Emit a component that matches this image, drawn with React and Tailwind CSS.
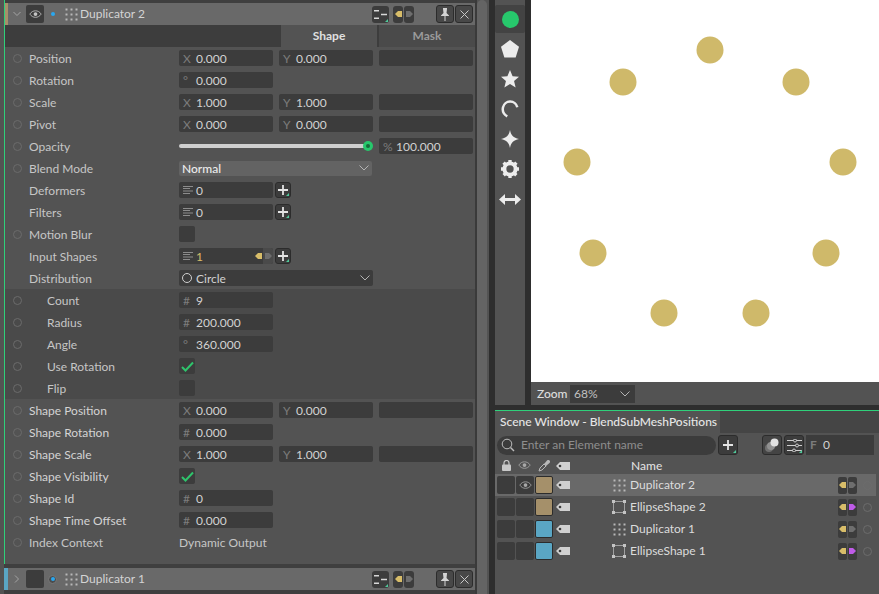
import React from 'react';

const Eye = ({c='#c4c4c4', w=16}) => (
  <svg width={w} height={w*0.625} viewBox="0 0 16 10" fill="none"><path d="M1 5C3 2 5.500 1 8 1s5 1 7 4c-2 3-4.500 4-7 4S3 8 1 5Z" stroke={c} strokeWidth="1"/><circle cx="8" cy="5" r="2.300" fill={c}/></svg>
);
const Dots = () => (
  <svg width="13" height="13" viewBox="0 0 13 13" className="shrink-0">
    {[0,5,10].map(x=>[0,5,10].map(y=><rect key={x+'-'+y} x={x+0.5} y={y+0.5} width="2" height="2" fill="#b8b8b8"/>))}
  </svg>
);
const EllipseIco = () => (
  <svg width="14" height="14" viewBox="0 0 14 14" className="shrink-0"><rect x="1.500" y="1.500" width="11" height="11" fill="none" stroke="#a0a0a0"/>{[0,11].map(x=>[0,11].map(y=><rect key={x+'-'+y} x={x} y={y} width="3" height="3" fill="#c4c4c4"/>))}</svg>
);
const Ring = ({c='#6b6b6b'}) => <span className="w-[9px] h-[9px] rounded-full border shrink-0 block" style={{borderColor:c}} />;
const LeftTri = () => <svg width="7" height="8" viewBox="0 0 7 8"><path d="M0 4 3 1h4v6H3Z" fill="#d8bd69"/></svg>;
const RightTri = ({c='#6e6e6e'}) => <svg width="7" height="8" viewBox="0 0 7 8"><path d="M0 1h4l3 3-3 3H0Z" fill={c}/></svg>;
const ListIco = () => (
  <svg width="11" height="8" viewBox="0 0 11 8" className="shrink-0 mt-[-2px]"><path d="M0 .5h10M0 2.500h7M0 5h10M0 7.500h7" stroke="#8c8c8c"/></svg>
);
const Check = () => <svg width="13" height="11" viewBox="0 0 13 11" fill="none"><path d="M1 6l3.500 3.500L12 1.500" stroke="#2fc46c" strokeWidth="2"/></svg>;
const Chev = ({c='#b4b4b4'}) => <svg width="10" height="6" viewBox="0 0 10 6" fill="none" className="shrink-0"><path d="M.5.500 5 5 9.500.5" stroke={c}/></svg>;
const Tick = () => <svg className="absolute right-px bottom-px" width="3" height="3" viewBox="0 0 3 3"><path d="M3 0v3H0Z" fill="#4fc99a"/></svg>;

const Plus = () => (
  <span className="relative w-[16px] h-[16px] ml-[2px] bg-[#3c3c3c] border border-[#2c2c2c] rounded-[3px] flex items-center justify-center">
    <svg width="10" height="10" viewBox="0 0 10 10"><path d="M5 0v10M0 5h10" stroke="#e4e4e4" strokeWidth="1.800"/></svg><Tick/>
  </span>
);
const Field = ({pre, val, w='w-[94px]', yellow, children}) => (
  <div className={`${w} h-[16px] bg-[#3c3c3c] rounded-[2px] flex items-center pl-[4px] shrink-0 overflow-hidden`}>
    {pre && <span className="w-[13px] pt-[2px] text-[#7c7c7c] text-[12px] leading-none shrink-0">{pre}</span>}
    <span className={`text-[12px] pt-[2px] leading-none ${yellow?'text-[#d8bd69]':'text-[#d2d2d2]'}`}>{val}</span>
    {children}
  </div>
);
const Blank = () => <div className="w-[94px] h-[16px] bg-[#3c3c3c] rounded-[2px] shrink-0" />;
const Box = ({on}) => <div className="w-[16px] h-[16px] bg-[#3c3c3c] rounded-[2px] flex items-center justify-center">{on && <Check/>}</div>;
const XY = ({x, y}) => (
  <div className="flex gap-[6px]"><Field pre="X" val={x}/><Field pre="Y" val={y}/><Blank/></div>
);
const Row = ({label, ring=true, sub, bright, children}) => (
  <div className={`h-[22px] flex items-center pl-[8px] ${sub?'bg-[#4a4a4a]':''}`}>
    <div className="w-[9px] shrink-0 flex items-center">{ring && <Ring/>}</div>
    <div className={`${sub?'w-[132px] ml-[25px]':'w-[150px] ml-[7px]'} pt-[2px] text-[12px] ${bright?'text-[#d4d4d4]':'text-[#c6c6c6]'} leading-none shrink-0`}>{label}</div>
    <div className="flex items-center">{children}</div>
  </div>
);
const NodeHeader = ({stripe, sw, eye, open, title, dotRing}) => (
  <div className="h-[22px] bg-[#696969] flex items-center shrink-0">
    <div className={`${sw} h-full shrink-0`} style={{background:stripe}} />
    <div className="w-[18px] flex justify-center shrink-0">
      <svg width="8" height="8" viewBox="0 0 8 8" fill="none">{open ? <path d="M.5 2 4 5.500 7.500 2" stroke="#a4a4a4"/> : <path d="M2 .5 5.500 4 2 7.500" stroke="#a4a4a4"/>}</svg>
    </div>
    <div className="w-[18px] h-[18px] bg-[#3c3c3c] rounded-[2px] flex items-center justify-center shrink-0">{eye && <Eye w={13}/>}</div>
    <div className={`w-[9px] h-[9px] ml-[4px] rounded-full flex items-center justify-center shrink-0 ${dotRing?'bg-[#4c4c4c] border border-[#7a7a7a]':''}`}><span className="w-[4px] h-[4px] rounded-full bg-[#2aa7ef] shrink-0"/></div>
    <div className="ml-[8px] flex"><Dots/></div>
    <span className="ml-[2px] text-[12px] text-[#d4d4d4] leading-none">{title}</span>
    <div className="ml-auto mr-[2px] flex items-center">
      <span className="relative w-[17px] h-[17px] bg-[#3c3c3c] rounded-[3px] flex items-center justify-center">
        <svg width="13" height="9" viewBox="0 0 13 9"><path d="M0 .75h5M0 8.250h5M7 4.500h6" stroke="#d8d8d8" strokeWidth="1.500"/></svg><Tick/>
      </span>
      <span className="w-[10px] h-[17px] bg-[#3c3c3c] rounded-[3px] ml-[4px] flex items-center justify-center"><LeftTri/></span>
      <span className="w-[10px] h-[17px] bg-[#3c3c3c] rounded-[3px] ml-[1px] flex items-center justify-center"><RightTri/></span>
      <span className="w-[18px] h-[18px] bg-[#484848] border border-[#2c2c2c] rounded-[3px] ml-[22px] flex items-center justify-center">
        <svg width="8" height="13" viewBox="0 0 8 13"><path d="M2 0h4v1l-.5 4L8 7.500V8H4.500v5h-1V8H0v-.5L2.500 5 2 1Z" fill="#d4d4d4"/></svg>
      </span>
      <span className="w-[18px] h-[18px] bg-[#484848] border border-[#2c2c2c] rounded-[3px] ml-[1px] flex items-center justify-center">
        <svg width="9" height="9" viewBox="0 0 9 9"><path d="M.5.500l8 8M8.500.5l-8 8" stroke="#c8c8c8"/></svg>
      </span>
    </div>
  </div>
);
const Pill = ({magenta}) => (
  <div className="flex gap-px">
    <span className="w-[9px] h-[17px] bg-[#3c3c3c] rounded-[2px] flex items-center justify-center"><LeftTri/></span>
    <span className="w-[9px] h-[17px] bg-[#3c3c3c] rounded-[2px] flex items-center justify-center"><RightTri c={magenta?'#bf5be8':'#6e6e6e'}/></span>
  </div>
);
const Tag = () => <svg width="14" height="8" viewBox="0 0 14 8"><path d="M4 0h10v8H4L0 4Z" fill="#d0d0d0"/><circle cx="4" cy="4" r="1.300" fill="#3c3c3c"/></svg>;
const SceneRow = ({name, color, eye, sel, ico, magenta}) => (
  <div className={`h-[22px] flex items-center mr-[3px] ${sel?'bg-[#696969]':''}`}>
    <div className="w-[18px] h-[18px] ml-[2px] bg-[#3c3c3c] rounded-[2px] shrink-0" />
    <div className="w-[18px] h-[18px] ml-px bg-[#3c3c3c] rounded-[2px] shrink-0 flex items-center justify-center">{eye && <Eye w={13} c="#a8a8a8"/>}</div>
    <div className="w-[18px] h-[18px] ml-px border border-[#2c2c2c] rounded-[2px] shrink-0" style={{background:color}} />
    <div className="ml-[3px] w-[14px] flex"><Tag/></div>
    <div className="ml-[42px] w-[14px] flex justify-center">{ico==='dots' ? <Dots/> : <EllipseIco/>}</div>
    <span className="ml-[4px] text-[12px] text-[#dcdcdc] leading-none">{name}</span>
    <div className="ml-auto flex items-center">
      <Pill magenta={magenta}/>
      <div className="w-[9px] h-[9px] rounded-full border border-[#6c6c6c] ml-[6px] mr-[4px]" />
    </div>
  </div>
);
const dots = [[179,50],[92,82],[265,82],[46,162],[312,162],[62,253],[295,253],[133,313],[225,313]];
const tools = ['circle','penta','star','arc','spark','gear','arrows'];
const Tool = ({t}) => {
  const cls = "h-[30px] flex items-center justify-center";
  if (t==='circle') return <div className="h-[28px] mb-[1px] mt-[1px] flex items-center justify-center bg-[#434343] rounded-[2px]"><span className="w-[17px] h-[17px] rounded-full bg-[#27c86c]"/></div>;
  const f = '#ececec';
  const map = {
    penta:<path d="M8 0l8 6-3 9.500H3L0 6Z" fill={f}/>,
    star:<path d="M8 0l2.300 5.600 5.700.5-4.400 3.700 1.400 5.700L8 12.400 3 15.500l1.400-5.700L0 6.100l5.700-.5Z" fill={f}/>,
    arc:<path d="M14.500 6.500A6.500 6.500 0 0 0 1.800 6.500c-.8 3.500 1 6.500 3.800 8" fill="none" stroke={f} strokeWidth="2.200"/>,
    spark:<path d="M8 0c.8 4.500 3 7 8 8-5 1-7.200 3.500-8 8-.8-4.500-3-7-8-8 5-1 7.200-3.500 8-8Z" fill={f}/>,
    gear:<g><circle cx="8" cy="8" r="5" fill="none" stroke={f} strokeWidth="3.500"/><path d="M8 0v16M0 8h16M2.300 2.300l11.400 11.400M13.700 2.300 2.300 13.700" stroke={f} strokeWidth="3" strokeDasharray="3 10"/></g>,
  };
  if (t==='arrows') return <div className={cls}><svg width="22" height="13" viewBox="0 0 22 13"><path d="M0 6.500 6 1v4h10V1l6 5.500-6 5.500V8H6v4Z" fill={f}/></svg></div>;
  return <div className={cls}><svg width="18" height="18" viewBox="0 0 16 16">{map[t]}</svg></div>;
};

export default function App() {
  return (
    <div className="w-[879px] h-[594px] bg-[#2e2e2e] flex overflow-hidden" style={{fontFamily:'Lato, "Noto Sans", sans-serif'}}>
      {/* left inspector */}
      <div className="w-[475px] h-full shrink-0 flex flex-col bg-[#535353] pl-[4px]">
        <div className="flex-1 border-l border-[#2fd07a] min-h-0 flex flex-col">
          <div className="h-[3px] bg-[#3f3f3f] shrink-0" />
          <NodeHeader stripe="#a5906a" sw="w-[3px]" eye open title="Duplicator 2" />
          <div className="h-[22px] bg-[#3d3d3d] flex shrink-0 justify-end">
            <div className="w-[96px] bg-[#535353] text-[#e0e0e0] text-[12px] font-bold flex items-center justify-center">Shape</div>
            <div className="w-[2px]"/>
            <div className="w-[96px] bg-[#4a4a4a] text-[#9a9a9a] text-[12px] font-bold flex items-center justify-center">Mask</div>
          </div>
          <Row label="Position"><XY x="0.000" y="0.000"/></Row>
          <Row label="Rotation"><Field pre="°" val="0.000"/></Row>
          <Row label="Scale"><XY x="1.000" y="1.000"/></Row>
          <Row label="Pivot"><XY x="0.000" y="0.000"/></Row>
          <Row label="Opacity">
            <div className="w-[194px] flex items-center relative h-[16px]">
              <div className="w-[190px] h-[4px] bg-[#cfcfcf] rounded-full"/>
              <span className="absolute left-[184px] top-[3px] w-[10px] h-[10px] rounded-full bg-[#27c86c] flex items-center justify-center"><span className="w-[4px] h-[4px] rounded-full bg-[#176b3c]"/></span>
            </div>
            <div className="ml-[6px]"><Field pre="%" val="100.000"/></div>
          </Row>
          <Row label="Blend Mode">
            <div className="w-[193px] h-[15px] bg-[#636363] rounded-[2px] flex items-center justify-between pl-[3px] pr-[3px]">
              <span className="text-[12px] font-medium pt-[2px] text-[#ececec] leading-none">Normal</span><Chev/>
            </div>
          </Row>
          <Row label="Deformers" ring={false}><Field val={<span className="flex items-center gap-[2px]"><ListIco/>0</span>}/><Plus/></Row>
          <Row label="Filters" ring={false}><Field val={<span className="flex items-center gap-[2px]"><ListIco/>0</span>}/><Plus/></Row>
          <Row label="Motion Blur"><Box/></Row>
          <Row label="Input Shapes" ring={false}>
            <Field yellow val={<span className="flex items-center gap-[2px]"><ListIco/>1</span>}>
              <div className="ml-auto flex items-center h-full">
                <span className="w-[10px] flex justify-center"><LeftTri/></span>
                <span className="w-[10px] h-full bg-[#4a4a4a] flex items-center justify-center"><RightTri/></span>
              </div>
            </Field><Plus/>
          </Row>
          <Row label="Distribution" ring={false}>
            <div className="w-[194px] h-[16px] bg-[#3c3c3c] rounded-[2px] flex items-center pl-[3px] pr-[3px]">
              <span className="w-[10px] h-[10px] rounded-full border border-[#d0d0d0] shrink-0"/>
              <span className="ml-[4px] pt-[2px] text-[12px] text-[#d2d2d2] leading-none">Circle</span>
              <span className="ml-auto flex"><Chev/></span>
            </div>
          </Row>
          <Row sub label="Count"><Field pre="#" val="9"/></Row>
          <Row sub label="Radius"><Field pre="#" val="200.000"/></Row>
          <Row sub label="Angle"><Field pre="°" val="360.000"/></Row>
          <Row sub label="Use Rotation"><Box on/></Row>
          <Row sub label="Flip"><Box/></Row>
          <Row label="Shape Position" bright><XY x="0.000" y="0.000"/></Row>
          <Row label="Shape Rotation" bright><Field pre="#" val="0.000"/></Row>
          <Row label="Shape Scale" bright><XY x="1.000" y="1.000"/></Row>
          <Row label="Shape Visibility" bright><Box on/></Row>
          <Row label="Shape Id" bright><Field pre="#" val="0"/></Row>
          <Row label="Shape Time Offset" bright><Field pre="#" val="0.000"/></Row>
          <Row label="Index Context"><span className="text-[12px] pt-[2px] text-[#c6c6c6] leading-none">Dynamic Output</span></Row>
          <div className="flex-1"/>
        </div>
        <div className="shrink-0 flex flex-col">
          <div className="h-[4px] bg-[#3f3f3f]"/>
          <NodeHeader stripe="#5aa6c4" sw="w-[4px]" title="Duplicator 1" dotRing/>
          <div className="h-[4px] bg-[#3f3f3f]"/>
        </div>
      </div>
      {/* scrollbar */}
      <div className="w-[14px] h-full bg-[#535353] border-l-2 border-[#3a3a3a] shrink-0">
        <div className="w-[10px] h-full bg-[#646464] rounded-t-[5px]"/>
      </div>
      <div className="flex-1 flex flex-col ml-[6px] min-w-0">
        <div className="flex h-[405px] shrink-0">
          <div className="w-[30px] bg-[#535353] shrink-0 pt-[4px] flex flex-col">
            {tools.map(t=><Tool key={t} t={t}/>)}
          </div>
          <div className="ml-[6px] flex-1 flex flex-col">
            <div className="h-[382px] bg-white shrink-0">
              <svg width="348" height="382" viewBox="0 0 348 382">
                {dots.map(([x,y],i)=><circle key={i} cx={x} cy={y} r="13.500" fill="#cfb96a"/>)}
              </svg>
            </div>
            <div className="h-[23px] bg-[#535353] flex items-center pl-[6px]">
              <span className="text-[12px] font-medium text-[#dedede] leading-none w-[33px]">Zoom</span>
              <div className="w-[65px] h-[18px] bg-[#3c3c3c] flex items-center justify-between pl-[4px] pr-[5px]">
                <span className="text-[12px] text-[#c0c0c0] leading-none">68%</span><Chev/>
              </div>
            </div>
          </div>
        </div>
        <div className="h-[5px] shrink-0"/>
        <div className="flex-1 bg-[#535353] border-t border-[#2fd07a] flex flex-col min-h-0">
          <div className="h-[22px] bg-[#454545] flex shrink-0">
            <div className="w-[225px] bg-[#535353] flex items-center pl-[5px] text-[12px] font-medium text-[#e6e6e6] leading-none whitespace-nowrap">Scene Window - BlendSubMeshPositions</div>
          </div>
          <div className="h-[24px] flex items-center shrink-0 pr-[5px] pl-[2px]">
            <div className="w-[219px] h-[19px] bg-[#3c3c3c] rounded-full flex items-center pl-[4px] shrink-0">
              <svg width="14" height="14" viewBox="0 0 14 14" fill="none"><circle cx="6" cy="6" r="4.800" stroke="#bcbcbc"/><path d="M9.500 9.500 13 13" stroke="#bcbcbc" strokeWidth="1.400"/></svg>
              <span className="ml-[6px] text-[12px] text-[#8e8e8e] leading-none">Enter an Element name</span>
            </div>
            <span className="relative w-[20px] h-[20px] ml-[2px] bg-[#3c3c3c] border border-[#2c2c2c] rounded-[3px] flex items-center justify-center shrink-0">
              <svg width="10" height="10" viewBox="0 0 10 10"><path d="M5 0v10M0 5h10" stroke="#e4e4e4" strokeWidth="1.800"/></svg><Tick/>
            </span>
            <span className="w-[20px] h-[20px] ml-[24px] bg-[#444] border border-[#2c2c2c] rounded-[3px] flex items-center justify-center shrink-0">
              <svg width="16" height="16" viewBox="0 0 16 16"><circle cx="5" cy="11" r="4" fill="#707070"/><circle cx="7" cy="9" r="4" fill="#909090"/><circle cx="10.500" cy="5.500" r="4" fill="#e2e2e2"/></svg>
            </span>
            <span className="relative w-[20px] h-[20px] ml-[2px] bg-[#3c3c3c] border border-[#2c2c2c] rounded-[3px] flex items-center justify-center shrink-0">
              <svg width="15" height="13" viewBox="0 0 15 13" fill="none"><path d="M0 1.500h15M0 6.500h15M0 11.500h15" stroke="#cfcfcf"/><circle cx="8" cy="1.500" r="1.500" fill="#3c3c3c" stroke="#cfcfcf"/><circle cx="10" cy="6.500" r="1.500" fill="#3c3c3c" stroke="#cfcfcf"/><circle cx="7" cy="11.500" r="1.500" fill="#3c3c3c" stroke="#cfcfcf"/></svg><Tick/>
            </span>
            <div className="ml-[2px] flex-1 h-[20px] bg-[#3c3c3c] flex items-center pl-[4px]">
              <span className="text-[12px] text-[#7c7c7c] leading-none w-[13px] font-bold">F</span>
              <span className="text-[12px] text-[#d2d2d2] leading-none">0</span>
            </div>
          </div>
          <div className="h-[17px] flex items-center shrink-0">
            <div className="ml-[7px] w-[9px] flex">
              <svg width="9" height="11" viewBox="0 0 9 11"><rect y="4.500" width="9" height="6.500" rx="1" fill="#c8c8c8"/><path d="M2 5V3a2.500 2.500 0 0 1 5 0v2" fill="none" stroke="#c8c8c8" strokeWidth="1.200"/></svg>
            </div>
            <div className="ml-[7px] flex"><Eye w={13} c="#a8a8a8"/></div>
            <div className="ml-[7px] flex">
              <svg width="12" height="12" viewBox="0 0 12 12"><path d="M1 11l1-3 4-4 2 2-4 4Z" fill="none" stroke="#b8b8b8"/><path d="M5.500 3 6.500 3.500 9 .5a1.500 1.500 0 0 1 2.500 2.500L8.500 5.500l.5 1Z" fill="#b8b8b8"/></svg>
            </div>
            <div className="ml-[6px] flex"><Tag/></div>
            <span className="ml-[61px] text-[12px] font-medium text-[#dedede] leading-none">Name</span>
          </div>
          <SceneRow name="Duplicator 2" color="#a5906a" eye sel ico="dots"/>
          <SceneRow name="EllipseShape 2" color="#a5906a" ico="ellipse" magenta/>
          <SceneRow name="Duplicator 1" color="#5aa6c4" ico="dots"/>
          <SceneRow name="EllipseShape 1" color="#5aa6c4" ico="ellipse" magenta/>
        </div>
      </div>
    </div>
  );
}
